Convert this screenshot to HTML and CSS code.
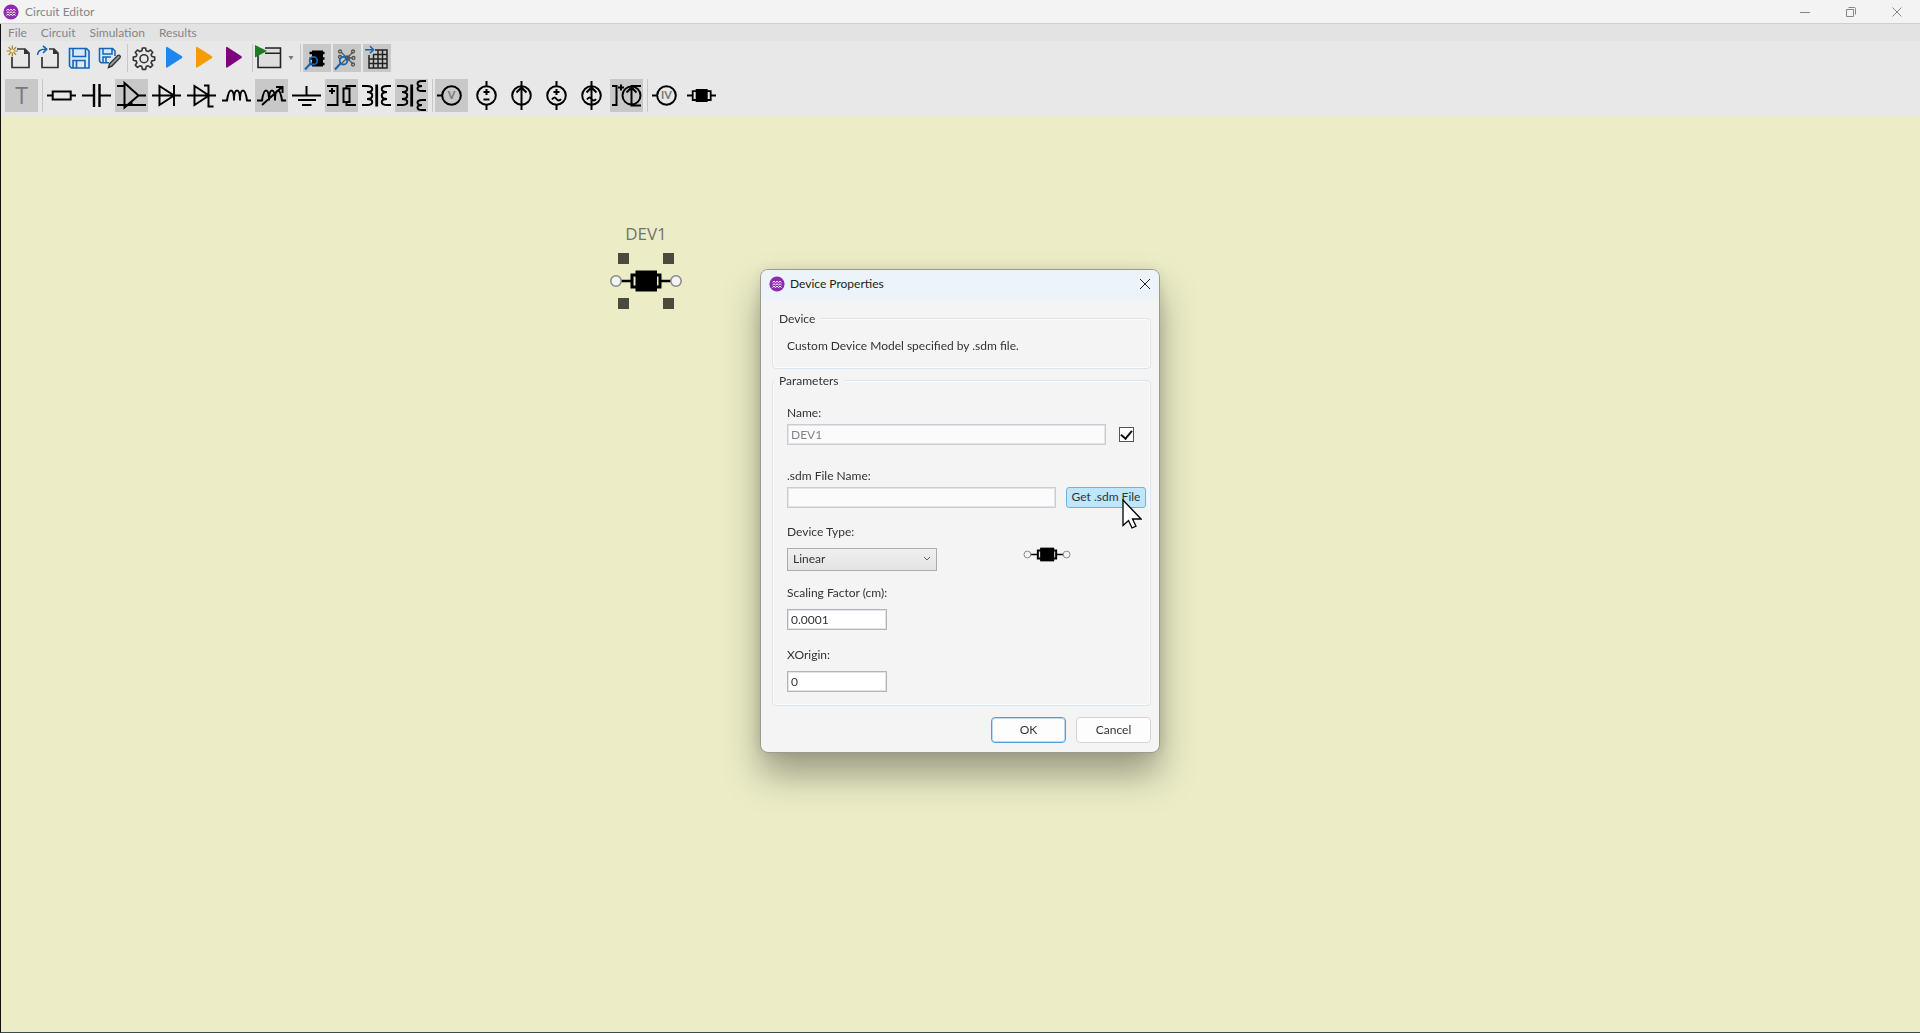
FILE: index.html
```html
<!DOCTYPE html>
<html lang="en">
<head>
<meta charset="utf-8">
<title>Circuit Editor</title>
<link rel="stylesheet" href="styles.css">
</head>
<body>
<svg class="defs" aria-hidden="true">
  <symbol id="logo" viewBox="0 0 16 16"><circle cx="8" cy="8" r="7.6" fill="#8e2bb0"/><g fill="none" stroke="#fff" stroke-width="1"><path d="M3.500 6.500q1.500-2.600 3 0 1.500-2.600 3 0 1.500-2.600 3 0"/><path d="M3.500 9q1.500-2.600 3 0 1.500-2.600 3 0 1.500-2.600 3 0"/><path d="M3.500 11.500q1.500-2.600 3 0 1.500-2.600 3 0 1.500-2.600 3 0"/></g></symbol>
  <symbol id="chip" viewBox="0 0 33 33"><path d="M2 16.500h6M26 16.500h5M7.700 12.200h18v8.800h-18z" fill="none" stroke="#000" stroke-width="1.8"/><path d="M10.700 10h12v13h-12z"/></symbol>
  <symbol id="device" viewBox="0 0 74 26"><path d="M11 13h11M52 13h12" stroke="#000" stroke-width="2.4"/><path d="M23 7h28v12H23z" fill="#eceec6" stroke="#000" stroke-width="3"/><path d="M26.500 2.500h21.500v21h-21.500z"/><g fill="#f4f4f4" stroke="#888" stroke-width="1.500"><circle cx="7" cy="13" r="5.200"/><circle cx="67" cy="13" r="5.200"/></g></symbol>
</svg>
<div class="app">
  <header class="titlebar">
    <svg class="logo"><use href="#logo"/></svg>
    <h1 class="app-title">Circuit Editor</h1>
    <button class="win-btn" aria-label="Minimize"><svg viewBox="0 0 12 12"><path d="M1 6.500h10"/></svg></button>
    <button class="win-btn" aria-label="Restore"><svg viewBox="0 0 12 12"><path d="M1.500 3.500h7v7h-7zM3.500 1.500h6q1 0 1 1v6"/></svg></button>
    <button class="win-btn" aria-label="Close"><svg viewBox="0 0 12 12"><path d="M1.500 1.500l9 9M10.500 1.500l-9 9"/></svg></button>
  </header>
  <div class="workspace">
    <nav class="menubar">
      <button>File</button><button>Circuit</button><button>Simulation</button><button>Results</button>
    </nav>
    <div class="toolbar">
      <button aria-label="New"><svg viewBox="0 0 28 28"><path d="M12 5h8l4 4v14.500H7V13" fill="none" stroke="#333" stroke-width="1.700"/><path d="M19 4.500v5.500h5.500z" fill="#333"/><path d="M7.300 1.500v11M1.800 7h11M3.500 3.200l7.600 7.600M11.100 3.200l-7.600 7.600" stroke="#a8791a" stroke-width="1.200"/><circle cx="7.300" cy="7" r="1.700" fill="#e8e8e8"/></svg></button>
      <button aria-label="Open"><svg viewBox="0 0 28 28"><path d="M14 5h5l4 4v14.500H7V13" fill="none" stroke="#333" stroke-width="1.700"/><path d="M18 4.500v5.500h5.500z" fill="#333"/><path d="M2.500 11q.5-6 8-5.700M8 1.800l3.700 3.500L8 9" fill="none" stroke="#1664b4" stroke-width="1.600"/></svg></button>
      <button aria-label="Save"><svg viewBox="0 0 28 28"><path d="M4.500 4.500h17l2.500 2.500v17H6.500l-2-2z" fill="#d9e8f7"/><path d="M4.500 4.500h17l2.500 2.500v17H6.500l-2-2zM8 4.500v8h12.500v-8M8 24v-7.500h12V24M11.500 17v7" fill="none" stroke="#1664b4" stroke-width="1.600"/></svg></button>
      <button aria-label="Save As"><svg viewBox="0 0 28 28"><path d="M4.500 4.500h13L20 7v5l-6 7H6l-1.500-1.500z" fill="#d9e8f7"/><path d="M14 18.700H6l-1.500-1.500V4.500h13L20 7v5M8 4.500v5.500h9V4.500M8 18v-5h8M11 13.500v5" fill="none" stroke="#1664b4" stroke-width="1.500"/><path d="M13.500 23.500l1.200-4 8-8q1.300-.8 2.200.2t0 2.200l-8 8.200z" fill="#999" stroke="#333" stroke-width="1.400"/></svg></button>
      <span class="sep"></span>
      <button aria-label="Settings"><svg viewBox="0 0 28 28"><g fill="none" stroke="#333" stroke-width="1.600" stroke-linejoin="round"><path d="M12.400 4h3.200l.6 2.800 1.900.8 2.400-1.600 2.200 2.200-1.600 2.400.8 1.900 2.800.6v3.200l-2.800.6-.8 1.900 1.600 2.400-2.200 2.200-2.400-1.600-1.900.8-.6 2.800h-3.200l-.6-2.800-1.900-.8-2.400 1.600-2.200-2.200 1.600-2.400-.8-1.900-2.800-.6v-3.200l2.800-.6.8-1.900-1.600-2.400 2.200-2.200 2.400 1.600 1.900-.8z"/><circle cx="14" cy="14.700" r="4"/></g></svg></button>
      <button aria-label="Run"><svg viewBox="0 0 28 28"><path d="M6 3.500q.3-1 1.300-.6L22 12.300q.8.900 0 1.700L7.300 23.600q-1 .3-1.300-.7z" fill="#1f86f0"/></svg></button>
      <button aria-label="Run sweep"><svg viewBox="0 0 28 28"><path d="M6 3.500q.3-1 1.300-.6L22 12.300q.8.900 0 1.700L7.300 23.600q-1 .3-1.300-.7z" fill="#f59c00"/></svg></button>
      <button aria-label="Run optimization"><svg viewBox="0 0 28 28"><path d="M6 3.500q.3-1 1.300-.6L21.500 12.300q.8.900 0 1.700L7.300 23.600q-1 .3-1.300-.7z" fill="#7b047f"/></svg></button>
      <span class="sep"></span>
      <button aria-label="Run window"><svg viewBox="0 0 28 28"><path d="M3 4h22.500v19.500H3z" fill="#ddd"/><path d="M10 4h15.500v19.500H3V11M10 9.300h15.500" fill="none" stroke="#222" stroke-width="1.600"/><path d="M0 1v12.500L12 7z" fill="#1d7b22"/></svg></button>
      <button class="drop" aria-label="Run window options"><svg viewBox="0 0 8 6"><path d="M1.500 1h5L4 5z" fill="#777"/></svg></button>
      <span class="sep"></span>
      <button class="on" aria-label="View device"><svg viewBox="0 0 28 28"><path d="M9 6.500h11v16H9z"/><path d="M6.500 9h15M6.500 14.500h15M6.500 20h15" stroke="#000" stroke-width="2.500"/><path d="M2 25.500l5.500-6" stroke="#1664b4" stroke-width="2"/><circle cx="10.500" cy="16.700" r="3.800" fill="none" stroke="#1664b4" stroke-width="1.800"/></svg></button>
      <button class="on" aria-label="View netlist"><svg viewBox="0 0 28 28"><g fill="none" stroke="#555" stroke-width="1.300"><path d="M8 8l12 12M20 8L8 20M14 14h6"/><circle cx="7" cy="7.500" r="1.500"/><circle cx="20" cy="7.500" r="1.500"/><circle cx="20.500" cy="14" r="1.500"/><circle cx="20" cy="20.500" r="1.500"/><circle cx="7" cy="13" r="1.500"/></g><circle cx="14.500" cy="14" r="2.700" fill="#555"/><path d="M2 25.500l5.500-6" stroke="#1664b4" stroke-width="2"/><circle cx="10.500" cy="16.700" r="3.800" fill="none" stroke="#1664b4" stroke-width="1.800"/></svg></button>
      <button class="on" aria-label="View table"><svg viewBox="0 0 28 28"><path d="M12 6h12v18H6V11M6 15h18M6 19.500h18M10.500 10.500V24M15 6v18M19.500 6v18M10 10.500h14" fill="none" stroke="#222" stroke-width="1.500"/><path d="M2 5.700h8M7 2.200l3.500 3.500L7 9.200" fill="none" stroke="#1664b4" stroke-width="1.600"/></svg></button>
    </div>
    <div class="toolbar parts">
      <button class="on text-tool" aria-label="Text">T</button>
      <span class="sep"></span>
      <button aria-label="Resistor"><svg viewBox="0 0 33 33"><path d="M2 16.500h6M26 16.500h5M7.700 12.500h18v8h-18z"/></svg></button>
      <button aria-label="Capacitor"><svg viewBox="0 0 33 33"><path d="M2 16.500h12M20 16.500h11"/><path d="M14 5v23M19.500 5v23" stroke-width="2.400"/></svg></button>
      <button class="on" aria-label="Amplifier"><svg viewBox="0 0 33 33"><path d="M2 7h7.500M9.500 4v24.500L23.500 16.500zM23.500 16.500H31M2 26h29M16 22.500l1 3.500"/></svg></button>
      <button aria-label="Diode"><svg viewBox="0 0 33 33"><path d="M2 16.500h29M9.500 7v19L24 16.500zM24 6v21"/></svg></button>
      <button aria-label="Zener diode"><svg viewBox="0 0 33 33"><path d="M2 16.500h29M9.500 7v19L24 16.500zM19 6.500h4.500v21h5"/></svg></button>
      <button aria-label="Inductor"><svg viewBox="0 0 33 33"><path d="M2 21.500h5q1.500-10 4-10 3 0 3 10 0-10 3-10t3 10q0-10 3-10 2.500 0 4 10h4"/></svg></button>
      <button class="on" aria-label="Variable inductor"><svg viewBox="0 0 33 33"><path d="M2 21.500h5q1.500-10 4-10 3 0 3 10 0-10 3-10t3 10q0-10 3-10 2.500 0 4 10h4M7 26L27 8M21 8h6.500v6"/></svg></button>
      <button aria-label="Ground"><svg viewBox="0 0 33 33"><path d="M16.500 7v9.500M2 16.500h29M8 21h18M12 26h9.500"/></svg></button>
      <button class="on" aria-label="Controlled resistor"><svg viewBox="0 0 33 33"><path d="M2 7h10.500v19H2M4 12h6M7 9v6M31 7h-9.500v2.500M18.500 9.500h6V23h-6zM21.500 23v3H31"/></svg></button>
      <button aria-label="Transformer"><svg viewBox="0 0 33 33"><path d="M2 7h5c7 0 7 6 0 6c7 0 7 7 0 7c7 0 7 6 0 6H2M31 7h-4c-7 0-7 6 0 6c-7 0-7 7 0 7c-7 0-7 6 0 6h4"/><path d="M16.700 5.500v22" stroke-width="2.800"/></svg></button>
      <button class="on" aria-label="Dual transformer"><svg viewBox="0 0 33 33"><path d="M2 7h5c7 0 7 6 0 6c7 0 7 7 0 7c7 0 7 6 0 6H2M31 2h-4c-6 0-6 5 0 5c-6 0-6 5 0 5h4M31 21h-4c-6 0-6 5 0 5c-6 0-6 5 0 5h4"/><path d="M16.700 5.500v22" stroke-width="2.800"/></svg></button>
      <span class="sep"></span>
      <button class="on" aria-label="Voltage probe"><svg viewBox="0 0 33 33"><path d="M2 16.500h5"/><circle cx="16.500" cy="16.500" r="9.300"/><text x="16.500" y="20">V</text></svg></button>
      <button aria-label="DC voltage source"><svg viewBox="0 0 33 33"><circle cx="16.500" cy="16.500" r="9.300"/><path d="M16.500 2v5M16.500 26v5M13.500 13h6M16.500 10v6M13.500 20.500h6"/></svg></button>
      <button aria-label="DC current source"><svg viewBox="0 0 33 33"><circle cx="16.500" cy="16.500" r="9.300"/><path d="M16.500 2v29M11.500 13.500l5-5 5 5"/></svg></button>
      <button aria-label="AC voltage source"><svg viewBox="0 0 33 33"><circle cx="16.500" cy="16.500" r="9.300"/><path d="M16.500 2v5M16.500 26v5M13.500 13h6M16.500 10v6M12 20.500q2.200-3.500 4.500-.5t4.500 0"/></svg></button>
      <button aria-label="AC current source"><svg viewBox="0 0 33 33"><circle cx="16.500" cy="16.500" r="9.300"/><path d="M16.500 2v29M11.500 13.500l5-5 5 5M12 20.500q2.200-3.500 4.500-.5t4.500 0"/></svg></button>
      <button class="on" aria-label="Controlled current source"><svg viewBox="0 0 33 33"><circle cx="21.500" cy="16.500" r="9"/><path d="M2 7h4.500v19H2M8 8.500h6M11 5.500v6M31 7h-9.500v19.500H31M16.500 13.500l5-5 5 5"/></svg></button>
      <span class="sep"></span>
      <button aria-label="Current and voltage probe"><svg viewBox="0 0 33 33"><path d="M2 16.500h5"/><circle cx="16.500" cy="16.500" r="9.300"/><text x="16.500" y="20">IV</text></svg></button>
      <button aria-label="Custom device"><svg><use href="#chip"/></svg></button>
    </div>
    <main class="canvas">
      <div class="node">
        <span class="node-label">DEV1</span>
        <svg class="node-body" viewBox="0 0 74 58"><g fill="#4a4a3d"><path d="M9 1h11v11H9zM54 1h11v11H54zM9 46h11v11H9zM54 46h11v11H54z"/></g><use href="#device" x="0" y="16" width="74" height="26"/></svg>
      </div>
    </main>
  </div>
</div>
<div class="overlay">
  <form class="dialog" role="dialog" aria-labelledby="dlg-title">
    <div class="dialog-head">
      <svg class="logo"><use href="#logo"/></svg>
      <h2 id="dlg-title">Device Properties</h2>
      <button type="button" class="dialog-close" aria-label="Close"><svg viewBox="0 0 12 12"><path d="M1 1l10 10M11 1L1 11"/></svg></button>
    </div>
    <div class="dialog-body">
      <fieldset class="group about">
        <legend>Device</legend>
        <p>Custom Device Model specified by .sdm file.</p>
      </fieldset>
      <fieldset class="group params">
        <legend>Parameters</legend>
        <label for="name">Name:</label>
        <div class="row name-row">
          <input id="name" class="box" type="text" value="DEV1" disabled>
          <input class="tick" type="checkbox" aria-label="Show name" checked>
        </div>
        <label for="file">.sdm File Name:</label>
        <div class="row file-row">
          <input id="file" class="box" type="text" disabled>
          <div class="get-wrap">
            <button type="button" class="get">Get .sdm File</button>
            <svg class="cursor" viewBox="0 0 20 30"><path d="M1 1v25.500l5.500-5 3.500 7.500 4-1.800-3.500-7.200H19z" fill="#fff" stroke="#000" stroke-width="1.300"/></svg>
          </div>
        </div>
        <div class="type-row">
          <div class="field">
            <label for="type">Device Type:</label>
            <div class="select-wrap">
              <select id="type"><option>Linear</option></select>
              <svg class="chevron" viewBox="0 0 8 6"><path d="M1 1l3 3 3-3"/></svg>
            </div>
          </div>
          <svg class="preview"><use href="#device"/></svg>
        </div>
        <div class="field">
          <label for="scale">Scaling Factor (cm):</label>
          <input id="scale" class="box short" type="text" value="0.0001">
        </div>
        <div class="field">
          <label for="origin">XOrigin:</label>
          <input id="origin" class="box short" type="text" value="0">
        </div>
      </fieldset>
      <div class="actions">
        <button type="button" class="primary">OK</button>
        <button type="button">Cancel</button>
      </div>
    </div>
  </form>
</div>
</body>
</html>
```
FILE: styles.css
```css
* { box-sizing: border-box; }
body {
  margin: 0;
  font-family: Lato, "Open Sans", sans-serif;
  font-size: 12px;
  line-height: 16px;
  color: #333;
}
button, input, select { font: inherit; color: inherit; margin: 0; }
button { padding: 0; border: 0; background: none; }
svg { display: block; }
h1, h2, p { margin: 0; font-size: inherit; font-weight: 400; }
.defs { position: absolute; width: 0; height: 0; }

.app { display: flex; flex-direction: column; min-height: 100vh; }
.titlebar {
  display: flex;
  align-items: center;
  height: 24px;
  padding-left: 3px;
  background: #f3f3f3;
  border-bottom: 1px solid #cfcfcf;
  color: #858585;
}
.logo { width: 16px; height: 16px; }
.app-title { flex: 1; padding-left: 6px; }
.win-btn { display: grid; place-items: center; width: 46px; height: 20px; }
.win-btn svg { width: 12px; height: 12px; fill: none; stroke: #858585; }

.workspace {
  flex: 1;
  display: flex;
  flex-direction: column;
  border-left: 1px solid #111;
  border-bottom: 1px solid #3b4a4a;
}
.menubar {
  display: flex;
  gap: 14px;
  height: 17px;
  padding-left: 7px;
  background: #e3e3e3;
  color: #858585;
}
.toolbar {
  display: flex;
  gap: 2px;
  padding: 3px 4px;
  background: #e8e8e8;
}
.toolbar button { width: 28px; height: 28px; }
.toolbar svg { width: 28px; height: 28px; }
.toolbar .sep { width: 3px; border-right: 1px solid #c3c8cc; }
.toolbar .on { background: #c8c8c8; }
.toolbar .drop { width: 11px; display: grid; place-items: center; }
.toolbar .drop svg { width: 8px; height: 6px; }
.parts { padding: 4px; }
.parts button, .parts svg { width: 33px; height: 33px; }
.parts svg { fill: none; stroke: #000; stroke-width: 2; }
.parts svg use { fill: #000; stroke: none; }
.parts text {
  font-size: 11px;
  font-weight: 700;
  text-anchor: middle;
  fill: #777;
  stroke: none;
}
.parts .text-tool { font-family: "Open Sans", sans-serif; font-size: 23px; line-height: 33px; color: #777; }

.canvas { position: relative; flex: 1; background: #ecedc7; }
.node {
  position: absolute;
  left: 608px;
  top: 108px;
  width: 74px;
  text-align: center;
}
.node-label {
  display: block;
  padding-bottom: 8px;
  font-family: "Open Sans", sans-serif;
  font-size: 17px;
  line-height: 20px;
  color: #73736b;
}
.node-body { width: 74px; height: 58px; }

.overlay {
  position: fixed;
  inset: 0;
  display: flex;
  align-items: center;
  justify-content: center;
  padding-bottom: 12px;
}
.dialog {
  width: 400px;
  background: #f4f4f4;
  border: 1px solid #9a9b8c;
  border-radius: 8px;
  box-shadow: 0 22px 36px rgba(0, 0, 0, .34), 0 0 14px rgba(0, 0, 0, .1);
}
.dialog-head {
  display: flex;
  align-items: center;
  height: 29px;
  padding: 0 7px 0 8px;
  background: #ecf3f9;
  border-radius: 7px 7px 0 0;
  color: #222;
}
.dialog-head h2 { flex: 1; padding-left: 5px; }
.dialog-close { width: 14px; height: 20px; display: grid; place-items: center; }
.dialog-close svg { width: 12px; height: 12px; fill: none; stroke: #222; }
.dialog-body { padding: 12px 8px 9px 11px; }
.group {
  margin: 0 0 4px;
  border: 1px solid #dbe4ea;
  border-radius: 4px;
  box-shadow: inset 0 0 0 1px #fcfcfc;
  min-width: 0;
}
.group legend { padding: 0 5px; margin-left: -13px; background: #f4f4f4; }
.about { padding: 11px 14px 14px; }
.params { padding: 16px 4px 13px 14px; margin-bottom: 11px; }
.params label { display: block; }
.row { display: flex; padding-top: 3px; }
.row .box { flex: 1; min-width: 0; }
.box {
  display: block;
  height: 21px;
  padding: 0 3px;
  border: 1px solid #b2b4bb;
  outline: 0;
  background: #fff;
  box-shadow: inset 0 0 0 1px #e4e4e8;
}
.box:disabled { background: #fbfbfb; border-color: #cbccd0; color: #858585; }
.name-row { align-items: flex-end; gap: 13px; padding-right: 12px; margin-bottom: 23px; }
.tick {
  appearance: none;
  display: grid;
  place-items: center;
  width: 15px;
  height: 15px;
  margin-bottom: 3px;
  border: 1px solid #555;
  background: #fff;
}
.tick:checked::after {
  content: "";
  width: 5px;
  height: 9px;
  margin-bottom: 2px;
  border: solid #111;
  border-width: 0 2px 2px 0;
  transform: rotate(40deg);
}
.file-row { gap: 10px; margin-bottom: 16px; }
.get-wrap { position: relative; }
.get {
  width: 80px;
  height: 21px;
  border: 1px solid #73b2da;
  border-radius: 3px;
  background: #bee6fd;
}
.cursor { position: absolute; left: 56px; top: 12px; width: 20px; height: 30px; }
.type-row { display: flex; justify-content: space-between; align-items: flex-end; padding-right: 74px; margin-bottom: 14px; }
.preview { width: 50px; height: 17px; margin-bottom: 8px; }
.field label { padding-bottom: 8px; }
.select-wrap { position: relative; width: 150px; }
.select-wrap select {
  appearance: none;
  display: block;
  width: 100%;
  height: 23px;
  padding: 0 5px;
  border: 1px solid #acacac;
  border-radius: 0;
  background: linear-gradient(#efefef, #e4e4e4);
}
.chevron { position: absolute; right: 6px; top: 8px; width: 8px; height: 6px; fill: none; stroke: #666; }
.short { width: 100px; }
.field + .field { padding-top: 17px; }
.actions { display: flex; justify-content: flex-end; gap: 10px; }
.actions button {
  width: 75px;
  height: 26px;
  border: 1px solid #d4d4d4;
  border-radius: 4px;
  background: #fdfdfd;
}
.actions .primary { border-color: #4ba0dc; box-shadow: inset 0 0 0 1px #b8dcf4; }
```
